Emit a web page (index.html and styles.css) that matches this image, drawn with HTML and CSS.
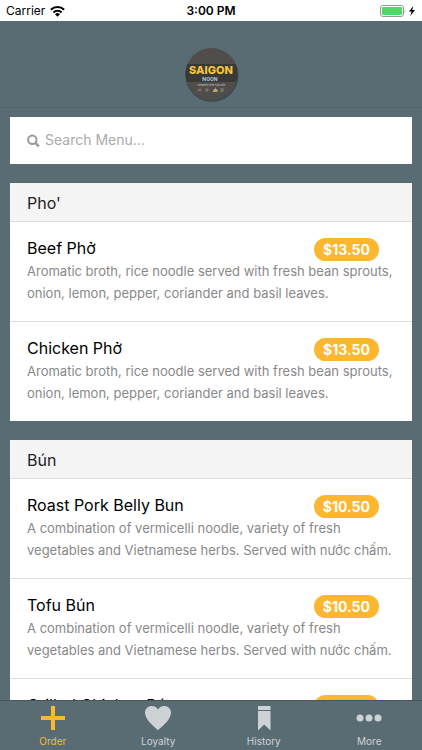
FILE: index.html
```html
<!DOCTYPE html>
<html lang="en">
<head>
<meta charset="utf-8">
<meta name="viewport" content="width=device-width, initial-scale=1">
<title>Saigon Noon</title>
<link rel="stylesheet" href="styles.css">
</head>
<body>
<div class="status">
  <div class="carrier">Carrier
    <svg width="15" height="12" viewBox="0 0 14 11"><g fill="none" stroke="#000" stroke-width="2"><path d="M.8 4.300a8.800 8.800 0 0 1 12.400 0"/><path d="M3.200 6.800a5.400 5.400 0 0 1 7.600 0"/></g><path d="M4.700 8.500a3.300 3.300 0 0 1 4.600 0L7 10.800z"/></svg>
  </div>
  <div class="time">3:00 PM</div>
  <div class="battery">
    <svg width="36" height="12" viewBox="0 0 36 12"><rect x=".5" y=".5" width="23" height="11" rx="2.500" fill="#fff" stroke="#999"/><rect x="2" y="2" width="20" height="8" rx="1" fill="#4cd964"/><path d="M24.700 4q1.500 2 0 4z" fill="#999"/><path d="M33.200 1 29 6.600h2.500L30.300 11l4.700-6h-2.700z"/></svg>
  </div>
</div>
<header class="header">
  <svg class="logo" width="60" height="60" viewBox="0 0 60 60" role="img" aria-label="Saigon Noon">
    <defs><clipPath id="disc"><circle cx="30.500" cy="29" r="26"/></clipPath></defs>
    <circle cx="31" cy="30.500" r="26.500" fill="#3d4c53"/>
    <circle cx="30.500" cy="29" r="26" fill="#504d4b"/>
    <path d="M0 19h60v18H0z" fill="#3a3938" clip-path="url(#disc)"/>
    <text x="30" y="29" class="logo-name">SAIGON</text>
    <text x="29" y="36" class="logo-sub">NOON</text>
    <text x="30" y="41" class="logo-tag">Vietnamese Street Food Cafe</text>
    <g fill="#77736d"><path d="M16 46l3-3 2 3z"/><circle cx="26" cy="45" r="1.700"/><circle cx="41" cy="45" r="2"/></g>
    <path d="M32 46q0-2 2-2v-2l1 2 2 1-1 2h-4z" fill="#b9a875"/>
  </svg>
</header>
<main class="content">
  <label class="search">
    <svg width="13" height="14" viewBox="0 0 13 14" fill="none" stroke="#999"><circle cx="5.300" cy="6.800" r="4.200" stroke-width="2"/><path d="M8.400 9.900l3.400 3.400" stroke-width="2.600"/></svg>
    <input type="search" placeholder="Search Menu..." aria-label="Search Menu">
  </label>
  <section class="card">
    <h2>Pho'</h2>
    <article class="item">
      <div class="item-top"><h3>Beef Phở</h3><span class="price">$13.50</span></div>
      <p>Aromatic broth, rice noodle served with fresh bean sprouts,<br>onion, lemon, pepper, coriander and basil leaves.</p>
    </article>
    <article class="item">
      <div class="item-top"><h3>Chicken Phở</h3><span class="price">$13.50</span></div>
      <p>Aromatic broth, rice noodle served with fresh bean sprouts,<br>onion, lemon, pepper, coriander and basil leaves.</p>
    </article>
  </section>
  <section class="card">
    <h2>Bún</h2>
    <article class="item">
      <div class="item-top"><h3>Roast Pork Belly Bun</h3><span class="price">$10.50</span></div>
      <p>A combination of vermicelli noodle, variety of fresh<br>vegetables and Vietnamese herbs. Served with nước chấm.</p>
    </article>
    <article class="item">
      <div class="item-top"><h3>Tofu Bún</h3><span class="price">$10.50</span></div>
      <p>A combination of vermicelli noodle, variety of fresh<br>vegetables and Vietnamese herbs. Served with nước chấm.</p>
    </article>
    <article class="item">
      <div class="item-top"><h3>Grilled Chicken Bún</h3><span class="price">$10.50</span></div>
    </article>
  </section>
</main>
<nav class="tabs">
  <a href="#order" class="tab active"><svg width="28" height="28" viewBox="0 0 28 28"><path d="M12 2h4v10h10v4H16v10h-4V16H2v-4h10z"/></svg>Order</a>
  <a href="#loyalty" class="tab"><svg width="28" height="28" viewBox="0 0 28 28"><path d="M14 26.200C11.500 23.500 1 16.500 1 8.800 1 1.500 10.500-.2 14 5.500 17.500-.2 27 1.500 27 8.800 27 16.500 16.500 23.500 14 26.200z"/></svg>Loyalty</a>
  <a href="#history" class="tab"><svg width="28" height="28" viewBox="0 0 28 28"><path d="M8 2h12.500v4H8zM8 7h12.500v19.500L14.200 20.500 8 26.500z"/></svg>History</a>
  <a href="#more" class="tab"><svg width="28" height="28" viewBox="0 0 28 28"><circle cx="5" cy="14" r="3.500"/><circle cx="14" cy="14" r="3.500"/><circle cx="23" cy="14" r="3.500"/></svg>More</a>
</nav>
</body>
</html>
```
FILE: styles.css
```css
* { box-sizing: border-box; }
body {
  margin: 0;
  height: 100vh;
  display: flex;
  flex-direction: column;
  overflow: hidden;
  background: #5a6c73;
  color: #000;
  font-family: Inter, "Liberation Sans", sans-serif;
}
h2, h3, p { margin: 0; font-weight: 400; }
.status {
  flex: none;
  height: 21px;
  padding: 0 6px;
  display: grid;
  grid-template-columns: 1fr auto 1fr;
  align-items: center;
  background: #fff;
  font-size: 12px;
}
.carrier { display: flex; align-items: center; gap: 5px; }
.time { font-weight: 600; }
.battery { display: flex; justify-content: flex-end; }
.header {
  flex: none;
  height: 87px;
  padding-top: 24px;
  display: flex;
  justify-content: center;
  border-bottom: 1px solid #52636a;
}
.logo-name, .logo-sub, .logo-tag { text-anchor: middle; }
.logo-name { font-size: 11px; font-weight: 800; fill: #f4c53b; }
.logo-sub { font-size: 5px; font-weight: 700; fill: #a5cee0; }
.logo-tag { font-size: 2px; fill: #ccc; }
.content {
  flex: 1;
  min-height: 0;
  overflow: hidden;
  padding: 9px 10px 0;
}
.search {
  height: 47px;
  padding: 0 17px 2px;
  display: flex;
  align-items: center;
  gap: 5px;
  background: #fff;
}
.search svg { flex: none; }
.search input {
  flex: 1;
  min-width: 0;
  padding: 0;
  border: 0;
  outline: 0;
  background: none;
  font: 14px/20px Inter, "Liberation Sans", sans-serif;
  color: #000;
}
.search input::placeholder { color: #aaa; }
.card { margin-top: 19px; background: #fff; }
.card h2 {
  height: 38px;
  padding: 1px 17px 0;
  font-size: 16px;
  line-height: 38px;
  background: #f4f4f4;
  color: #222;
}
.item {
  height: 100px;
  padding: 16px 17px 0;
  border-top: 1px solid #ddd;
}
.item-top {
  display: flex;
  justify-content: space-between;
  padding-right: 16px;
  height: 22px;
}
.item h3 { font-size: 16px; line-height: 20px; }
.price {
  height: 23px;
  padding: 0 9px;
  border-radius: 12px;
  background: #fdb62f;
  color: #fff;
  font-size: 14px;
  font-weight: 700;
  line-height: 23px;
}
.item p {
  font-size: 13px;
  line-height: 22px;
  color: #888;
  white-space: nowrap;
}
.tabs {
  flex: none;
  height: 50px;
  display: grid;
  grid-template-columns: repeat(4, 1fr);
  border-top: 1px solid #47565c;
}
.tab {
  display: flex;
  flex-direction: column;
  align-items: center;
  padding-top: 3px;
  font-size: 10px;
  line-height: 18px;
  color: #cdd2d5;
  text-decoration: none;
}
.tab svg { fill: currentColor; }
.tab.active { color: #fdb62f; }
```
